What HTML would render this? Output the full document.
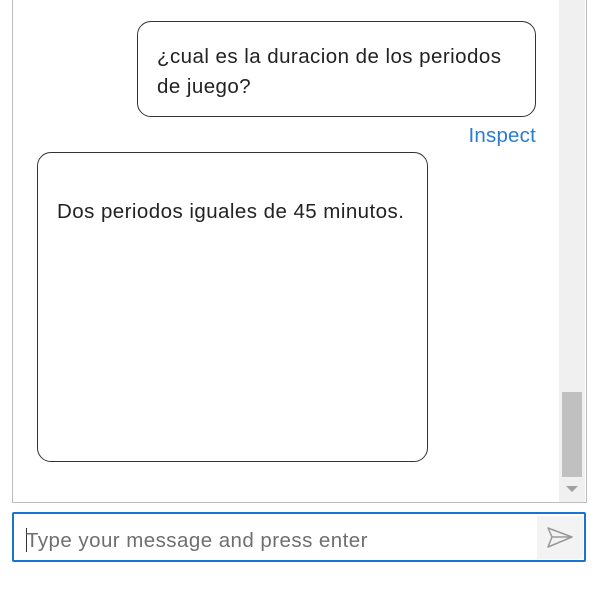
<!DOCTYPE html>
<html><head><meta charset="utf-8"><style>
body{margin:0;width:602px;height:591px;background:#fff;position:relative;overflow:hidden;font-family:"Liberation Sans",sans-serif;font-size:20.5px;letter-spacing:0.45px;color:#222}
.box{position:absolute;left:12px;top:-2px;width:573px;height:504px;border:1px solid #bcbcbc;border-top:none}
.sb{position:absolute;left:559px;top:0;width:26px;height:502px;background:#f0f0f0}
.thumb{position:absolute;left:562px;top:392px;width:20px;height:85px;background:#c0c0c0}
.arr{position:absolute;left:566px;top:486px;width:0;height:0;border-left:6px solid transparent;border-right:6px solid transparent;border-top:6px solid #a0a0a0}
.b{position:absolute;border:1.5px solid #333;border-radius:14px;box-sizing:border-box;line-height:30px;white-space:nowrap}
.ins{position:absolute;right:66px;top:124px;color:#2b7cd3;letter-spacing:0.2px}
.inp{position:absolute;left:12px;top:512px;width:574px;height:50px;border:2px solid #1a73d2;box-sizing:border-box;border-radius:2px}
.ph{position:absolute;left:12px;top:14px;color:#6f6f6f;line-height:26px}
.cur{position:absolute;left:12px;top:14px;width:1px;height:24px;background:#333}
.send{position:absolute;right:1px;top:2px;width:46px;height:43px;background:#f3f3f3}
</style></head><body>
<div class="box"></div>
<div class="sb"></div><div class="thumb"></div><div class="arr"></div>
<div class="b" style="left:137px;top:21px;width:399px;height:96px;padding:20px 19px">¿cual es la duracion de los periodos<br>de juego?</div>
<div class="ins">Inspect</div>
<div class="b" style="left:37px;top:152px;width:391px;height:310px;padding:44px 19px">Dos periodos iguales de 45 minutos.</div>
<div class="inp"><div class="cur"></div><div class="ph">Type your message and press enter</div>
<div class="send"><svg width="46" height="43" viewBox="0 0 46 43"><path d="M11 12 L35 21 L11 31 L15 21 Z M15 21 L35 21" fill="none" stroke="#999" stroke-width="1.5" stroke-linejoin="round"/></svg></div></div>
</body></html>
